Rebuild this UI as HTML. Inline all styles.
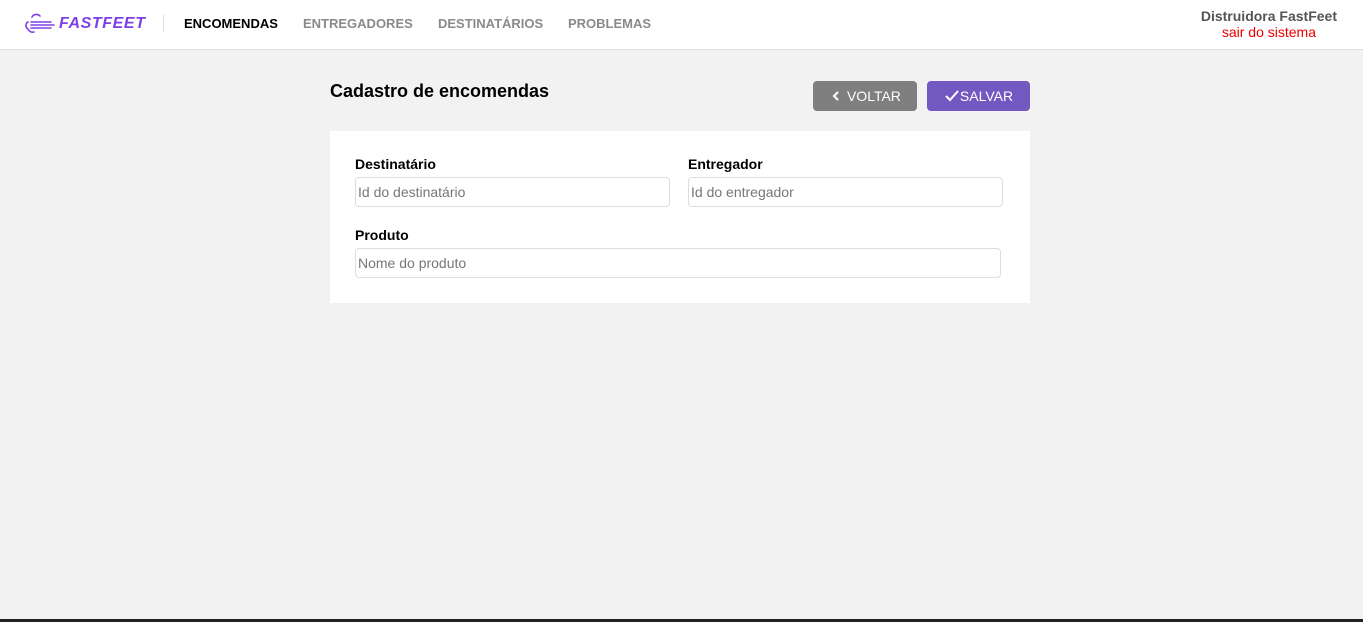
<!DOCTYPE html>
<html><head><meta charset="utf-8"><style>
*{box-sizing:border-box;margin:0;padding:0}
body{width:1363px;height:622px;background:#f2f2f2;font-family:"Liberation Sans",sans-serif;position:relative;overflow:hidden}
header{position:absolute;left:0;top:0;width:1363px;height:50px;background:#fff;border-bottom:1px solid #ddd}
.logo{position:absolute;left:22px;top:13px}
.logotext{position:absolute;left:59px;top:15px;color:#7d40e7;font-weight:bold;font-style:italic;font-size:16px;letter-spacing:.6px}
.sep{position:absolute;left:163px;top:15px;width:1px;height:17px;background:#ddd}
nav a{position:absolute;top:16px;font-size:13px;font-weight:bold;color:#8a8a8a;text-decoration:none}
.user{position:absolute;right:26px;top:8px;text-align:center;font-size:14px}
.user b{color:#555;display:block}
.user span{color:#e00}
h1{position:absolute;left:330px;top:81px;font-size:18px;font-weight:bold;color:#000}
.btn{position:absolute;top:81px;height:30px;border-radius:4px;color:#fff;font-size:14px;display:flex;align-items:center;justify-content:center}
.card{position:absolute;left:330px;top:131px;width:700px;height:172px;background:#fff}
label{position:absolute;font-size:14px;font-weight:bold;color:#000}
.in{position:absolute;height:30px;border:1px solid #ddd;border-radius:4px;font-size:14px;color:#777;padding-left:2px;line-height:28px}
.bottom{position:absolute;left:0;top:619px;width:1363px;height:3px;background:#222}
</style></head><body>
<header>
<svg class="logo" width="36" height="22" viewBox="0 0 36 22"><g fill="none" stroke="#7d40e7" stroke-width="1.6" stroke-linecap="round"><path d="M10 4a5 5 0 0 1 8-1"/><path d="M6 9a4 4 0 0 0 0 7 5 5 0 0 0 6 3"/><path d="M9 9h20M9 12h23M9 15h20"/></g></svg>
<div class="logotext">FASTFEET</div>
<div class="sep"></div>
<nav><a style="left:184px;color:#000">ENCOMENDAS</a><a style="left:303px">ENTREGADORES</a><a style="left:438px">DESTINATÁRIOS</a><a style="left:568px">PROBLEMAS</a></nav>
<div class="user"><b>Distruidora FastFeet</b><span>sair do sistema</span></div>
</header>
<h1>Cadastro de encomendas</h1>
<div class="btn" style="left:813px;width:104px;background:#7f7f7f"><svg width="14" height="14" viewBox="0 0 14 14"><path d="M9 3L5 7l4 4" fill="none" stroke="#fff" stroke-width="2"/></svg>&nbsp;VOLTAR</div>
<div class="btn" style="left:927px;width:103px;background:#7159c1"><svg width="16" height="14" viewBox="0 0 16 14"><path d="M2 7l4 4 8-9" fill="none" stroke="#fff" stroke-width="2"/></svg>SALVAR</div>
<div class="card">
<label style="left:25px;top:25px">Destinatário</label>
<div class="in" style="left:25px;top:46px;width:315px">Id do destinatário</div>
<label style="left:358px;top:25px">Entregador</label>
<div class="in" style="left:358px;top:46px;width:315px">Id do entregador</div>
<label style="left:25px;top:96px">Produto</label>
<div class="in" style="left:25px;top:117px;width:646px">Nome do produto</div>
</div>
<div class="bottom"></div>
</body></html>
